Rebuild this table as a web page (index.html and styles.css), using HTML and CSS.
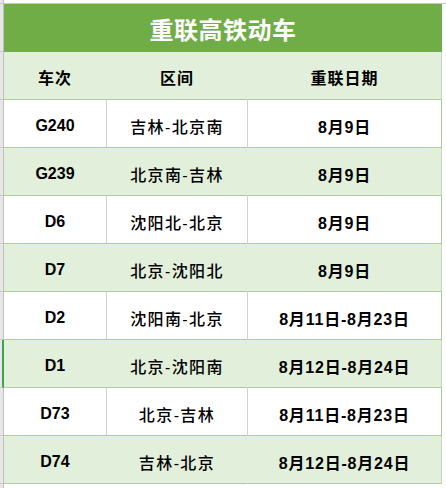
FILE: index.html
```html
<!DOCTYPE html>
<html lang="zh">
<head>
<meta charset="utf-8">
<title>重联高铁动车</title>
<link rel="stylesheet" href="styles.css">
</head>
<body>
<div class="sheet">
  <div class="top"><div class="corner"></div><div class="top-rest"></div></div>
  <div class="row">
    <div class="gut"></div>
    <div class="title">重联高铁动车</div>
  </div>
  <div class="row head">
    <div class="gut"></div>
    <div class="cell c1">车次</div>
    <div class="cell c2">区间</div>
    <div class="cell c3">重联日期</div>
  </div>
  <div class="row data">
    <div class="gut"></div>
    <div class="cell c1 num">G240</div>
    <div class="cell c2 txt">吉林-北京南</div>
    <div class="cell c3 num">8月9日</div>
  </div>
  <div class="row data alt">
    <div class="gut"></div>
    <div class="cell c1 num">G239</div>
    <div class="cell c2 txt">北京南-吉林</div>
    <div class="cell c3 num">8月9日</div>
  </div>
  <div class="row data">
    <div class="gut"></div>
    <div class="cell c1 num">D6</div>
    <div class="cell c2 txt">沈阳北-北京</div>
    <div class="cell c3 num">8月9日</div>
  </div>
  <div class="row data alt">
    <div class="gut"></div>
    <div class="cell c1 num">D7</div>
    <div class="cell c2 txt">北京-沈阳北</div>
    <div class="cell c3 num">8月9日</div>
  </div>
  <div class="row data">
    <div class="gut"></div>
    <div class="cell c1 num">D2</div>
    <div class="cell c2 txt">沈阳南-北京</div>
    <div class="cell c3 num">8月11日-8月23日</div>
  </div>
  <div class="row data alt">
    <div class="gut sel"></div>
    <div class="cell c1 num">D1</div>
    <div class="cell c2 txt">北京-沈阳南</div>
    <div class="cell c3 num">8月12日-8月24日</div>
  </div>
  <div class="row data">
    <div class="gut"></div>
    <div class="cell c1 num">D73</div>
    <div class="cell c2 txt">北京-吉林</div>
    <div class="cell c3 num">8月11日-8月23日</div>
  </div>
  <div class="row data alt">
    <div class="gut"></div>
    <div class="cell c1 num">D74</div>
    <div class="cell c2 txt">吉林-北京</div>
    <div class="cell c3 num">8月12日-8月24日</div>
  </div>
  <div class="row tail"><div class="gut"></div></div>
</div>
</body>
</html>
```
FILE: styles.css
```css
html, body {
  margin: 0;
  padding: 0;
  background: #ffffff;
}
body {
  font-family: "Liberation Sans", "Noto Sans CJK SC", sans-serif;
  color: #000000;
}
.sheet {
  width: 446px;
  height: 488px;
  overflow: hidden;
}
.top {
  display: flex;
  height: 3px;
  border-bottom: 1px solid #c6c6c6;
}
.corner {
  width: 3px;
  background: #e6e6e6;
  border-right: 1px solid #c0c0c0;
}
.top-rest {
  flex: 1;
}
.row {
  display: flex;
  height: 48px;
}
.gut {
  width: 3px;
  flex: none;
  background: #e6e6e6;
  border-right: 1px solid #c0c0c0;
  box-sizing: content-box;
  height: 47px;
  border-bottom: 1px solid #c6c6c6;
}
.gut.sel {
  width: 2px;
  border-right: 2px solid #3fa34d;
}
.title {
  width: 438px;
  height: 48px;
  background: #70ad47;
  color: #ffffff;
  font-size: 24px;
  font-weight: bold;
  display: flex;
  align-items: center;
  justify-content: center;
  letter-spacing: 0.5px;
}
.cell {
  box-sizing: border-box;
  height: 48px;
  display: flex;
  align-items: center;
  justify-content: center;
  border-bottom: 1px solid #a9d08e;
  padding-top: 4px;
  font-size: 16px;
}
.c1 { width: 103px; border-right: 1px solid #d0d0d0; }
.c2 { width: 141px; border-right: 1px solid #d0d0d0; }
.c3 { width: 194px; border-right: 1px solid #a9d08e; }
.head .cell, .alt .cell {
  background: #e2efda;
  border-right-color: #e2efda;
}
.head .c3, .alt .c3 {
  border-right-color: #c8d8bd;
}
.head .cell {
  font-weight: bold;
  letter-spacing: 1px;
  padding-top: 2px;
}
.num {
  font-weight: bold;
}
.txt {
  font-weight: 500;
  letter-spacing: 1.4px;
}
.c3.num {
  letter-spacing: 0.8px;
}
.tail .gut {
  border-bottom: none;
}
```
